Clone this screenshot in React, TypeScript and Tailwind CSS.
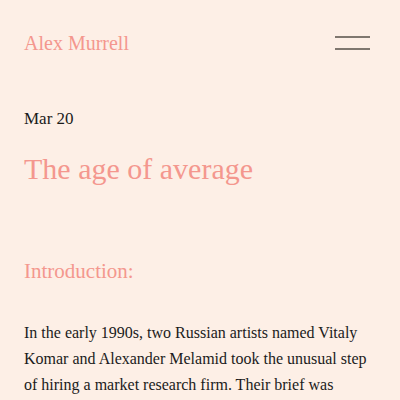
export default function App() {
  return (
    <div className="min-h-[400px] w-[400px] overflow-hidden bg-[#fdefe6] font-['Liberation_Serif',serif]">
      <header className="flex items-center justify-between px-6 pt-[22px] h-[64px]">
        <a className="text-[20px] leading-none text-[#f4978e]">Alex Murrell</a>
        <button className="flex flex-col gap-[10px] w-[35px] mr-[6px]">
          <span className="block h-[2px] w-full bg-[#7f776f]" />
          <span className="block h-[2px] w-full bg-[#7f776f]" />
        </button>
      </header>

      <main className="px-6">
        <p className="mt-[43px] text-[17px] leading-[24px] text-[#1b1b1b]">Mar 20</p>
        <h1 className="mt-[20px] text-[30px] leading-[36px] text-[#f4978e]">The age of average</h1>

        <h2 className="mt-[70px] text-[21px] leading-[28px] text-[#f4978e]">Introduction:</h2>

        <p className="mt-[35px] text-[16px] leading-[26px] text-[#1b1b1b]">
          In the early 1990s, two Russian artists named Vitaly Komar and Alexander Melamid took the
          unusual step of hiring a market research firm. Their brief was
        </p>
      </main>
    </div>
  );
}
